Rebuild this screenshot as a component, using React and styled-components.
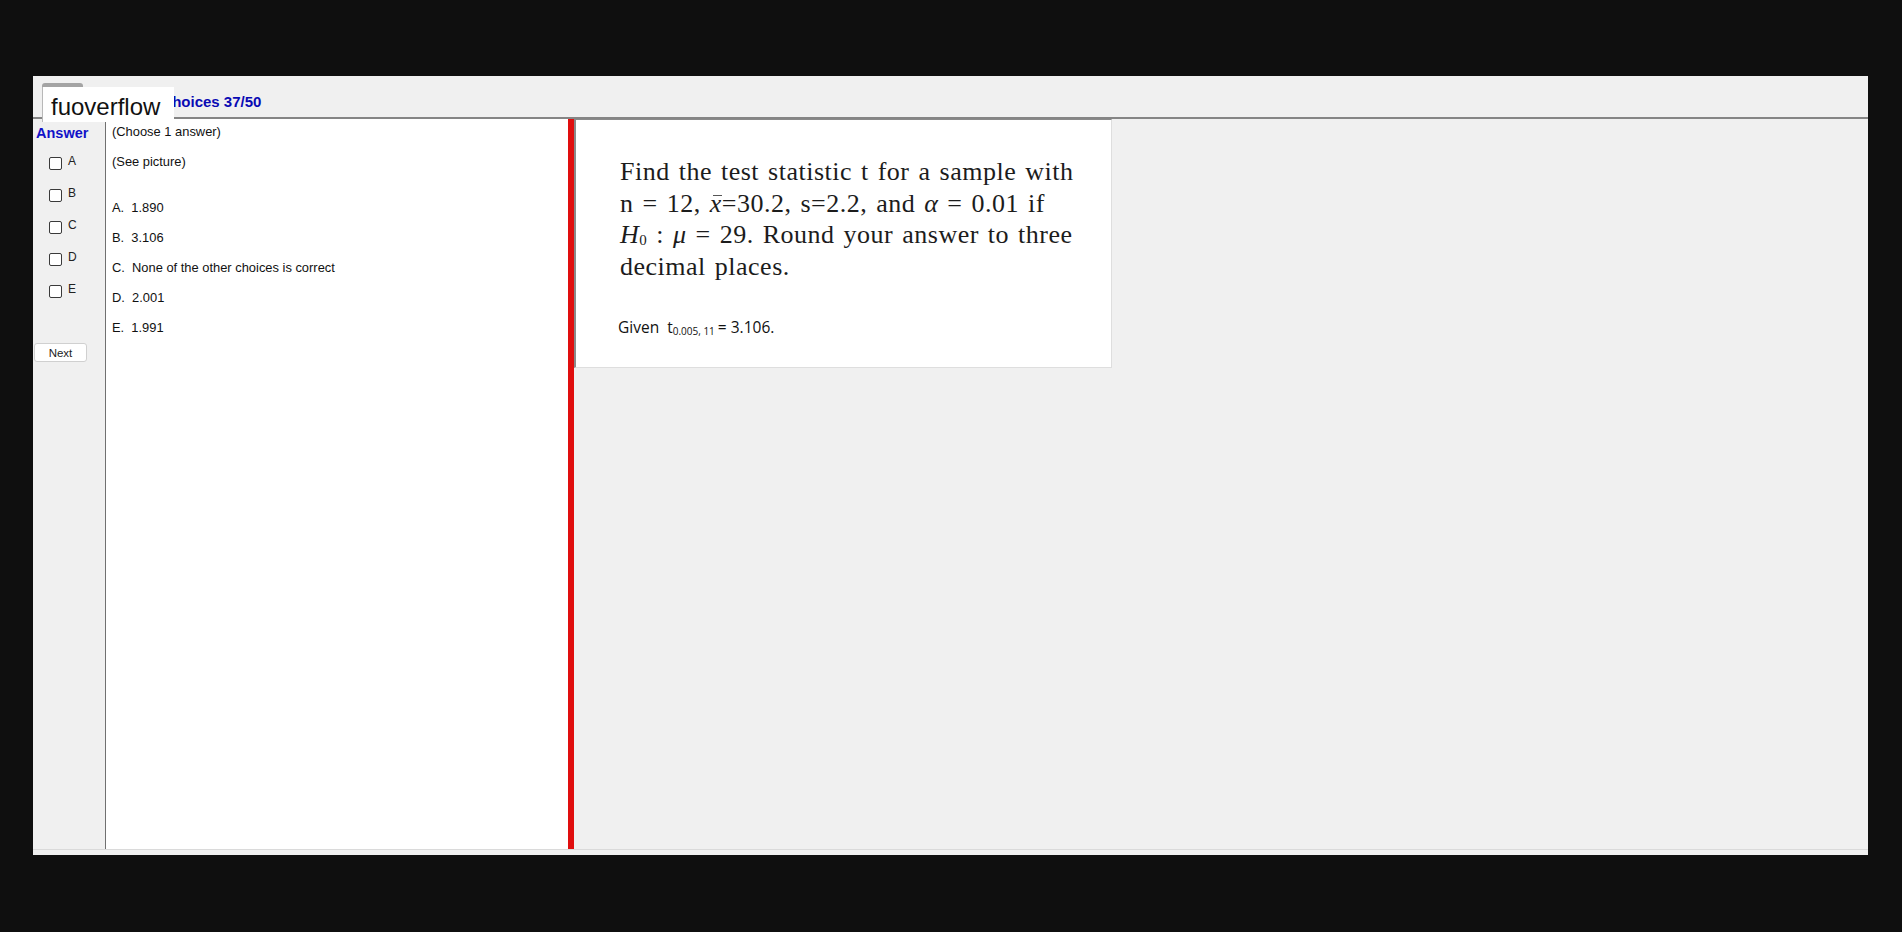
import React from "react";
import styled, { createGlobalStyle } from "styled-components";

const GlobalStyle = createGlobalStyle`
	html, body {
		margin: 0;
		padding: 0;
		background: #0f0f0f;
	}
	body {
		font-family: "Liberation Sans", Arial, sans-serif;
	}
`;

const Page = styled.div`
	height: 932px;
	padding: 76px 34px 0 33px;
	box-sizing: border-box;
`;

const Window = styled.div`
	height: 779px;
	background: #f0f0f0;
	display: flex;
	flex-direction: column;
	padding-bottom: 5px;
	box-sizing: border-box;
`;

const Header = styled.header`
	position: relative;
	height: 31px;
	border-bottom: 2px solid #858585;
	display: flex;
	align-items: center;
	padding: 10px 0 0 70px;
	box-sizing: content-box;

	h1 {
		margin: 0;
		font-size: 15px;
		font-weight: 700;
		color: #0a0ab4;
	}
`;

const Tab = styled.span`
	position: absolute;
	left: 9px;
	top: 7px;
	width: 41px;
	height: 5px;
	border-radius: 3px 3px 0 0;
	background: #a4a4a4;
`;

const Watermark = styled.div`
	position: absolute;
	left: 9px;
	top: 11px;
	width: 132px;
	height: 35px;
	background: #fff;
	border-left: 1px solid #b8b8b8;
	box-sizing: border-box;
	z-index: 2;
	font-size: 24px;
	line-height: 35px;
	padding: 2px 0 0 8px;
	color: #111;
`;

const Body = styled.div`
	flex: 1;
	display: flex;
	min-height: 0;
	border-bottom: 1px solid #dadada;
`;

const Sidebar = styled.aside`
	width: 73px;
	flex-shrink: 0;
	border-right: 1px solid #707070;
	padding-top: 5px;
	box-sizing: border-box;
`;

const AnswerTitle = styled.div`
	font-size: 14.5px;
	font-weight: 700;
	line-height: 18px;
	color: #1212c8;
	padding-left: 3px;
	margin-bottom: 5px;
`;

const CheckRow = styled.label`
	height: 32px;
	display: flex;
	align-items: center;
	padding-left: 16px;
	gap: 6px;
	font-size: 12px;
	color: #222;

	span {
		margin-top: -4px;
	}
`;

const Box = styled.i`
	width: 11px;
	height: 11px;
	border: 1px solid #3a3a3a;
	border-radius: 2px;
	background: #fff;
`;

const NextButton = styled.button`
	margin: 36px 0 0 1px;
	width: 53px;
	height: 19px;
	padding: 0;
	background: #fff;
	border: 1px solid #d0d0d0;
	border-radius: 3px;
	font-family: "Liberation Sans", Arial, sans-serif;
	font-size: 11.5px;
	color: #222;
`;

const Content = styled.section`
	width: 462px;
	flex-shrink: 0;
	background: #fff;
	padding: 5px 0 0 6px;
	box-sizing: border-box;
	font-size: 12.9px;
	color: #111;
`;

const Line = styled.div`
	line-height: 16px;
	margin-top: ${(p) => p.gap || 0}px;
	white-space: pre;
`;

const Splitter = styled.div`
	width: 6px;
	flex-shrink: 0;
	background: #e00e0e;
`;

const RightPane = styled.div`
	flex: 1;
	background: #f0f0f0;
`;

const Card = styled.div`
	width: 538px;
	height: 249px;
	background: #fff;
	border-left: 2px solid #8a8a8a;
	border-top: 1px solid #8a8a8a;
	border-right: 1px solid #dedede;
	border-bottom: 1px solid #dedede;
	box-sizing: border-box;
	padding: 36px 0 0 44px;
`;

const Problem = styled.p`
	margin: 0;
	font-family: "Liberation Serif", "Times New Roman", serif;
	font-size: 26px;
	line-height: 31.5px;
	letter-spacing: 0.5px;
	word-spacing: 2px;
	color: #1c1c1c;

	i {
		font-style: italic;
	}
	sub {
		font-size: 15px;
		line-height: 0;
		vertical-align: -2px;
	}
`;

const XBar = styled.i`
	position: relative;
	display: inline-block;

	&::before {
		content: "";
		position: absolute;
		left: 3px;
		right: 0;
		top: 7px;
		height: 1px;
		background: #555;
	}
`;

const Given = styled.div`
	margin: 34px 0 0 -2px;
	font-family: "Open Sans", "Liberation Sans", sans-serif;
	font-size: 15.5px;
	color: #111;

	sub {
		font-size: 10px;
		line-height: 0;
		vertical-align: -2px;
		margin-right: 3px;
	}
`;

const letters = ["A", "B", "C", "D", "E"];
const options = [
	"A.  1.890",
	"B.  3.106",
	"C.  None of the other choices is correct",
	"D.  2.001",
	"E.  1.991",
];

export default function App() {
	return (
		<Page>
			<GlobalStyle />
			<Window>
				<Header>
					<Tab />
					<Watermark>fuoverflow</Watermark>
					<h1>Multiple choices 37/50</h1>
				</Header>
				<Body>
					<Sidebar>
						<AnswerTitle>Answer</AnswerTitle>
						{letters.map((l) => (
							<CheckRow key={l}>
								<Box />
								<span>{l}</span>
							</CheckRow>
						))}
						<NextButton>Next</NextButton>
					</Sidebar>
					<Content>
						<Line>(Choose 1 answer)</Line>
						<Line gap={14}>(See picture)</Line>
						{options.map((o, i) => (
							<Line key={o} gap={i === 0 ? 30 : 14}>
								{o}
							</Line>
						))}
					</Content>
					<Splitter />
					<RightPane>
						<Card>
							<Problem>
								Find the test statistic t for a sample with
								<br />n = 12, <XBar>x</XBar>=30.2, s=2.2, and <i>α</i> = 0.01 if
								<br />
								<i>H</i>
								<sub>0</sub> : <i>μ</i> = 29. Round your answer to three
								<br />
								decimal places.
							</Problem>
							<Given>
								Given &nbsp;t<sub>0.005, 11</sub>= 3.106.
							</Given>
						</Card>
					</RightPane>
				</Body>
			</Window>
		</Page>
	);
}
